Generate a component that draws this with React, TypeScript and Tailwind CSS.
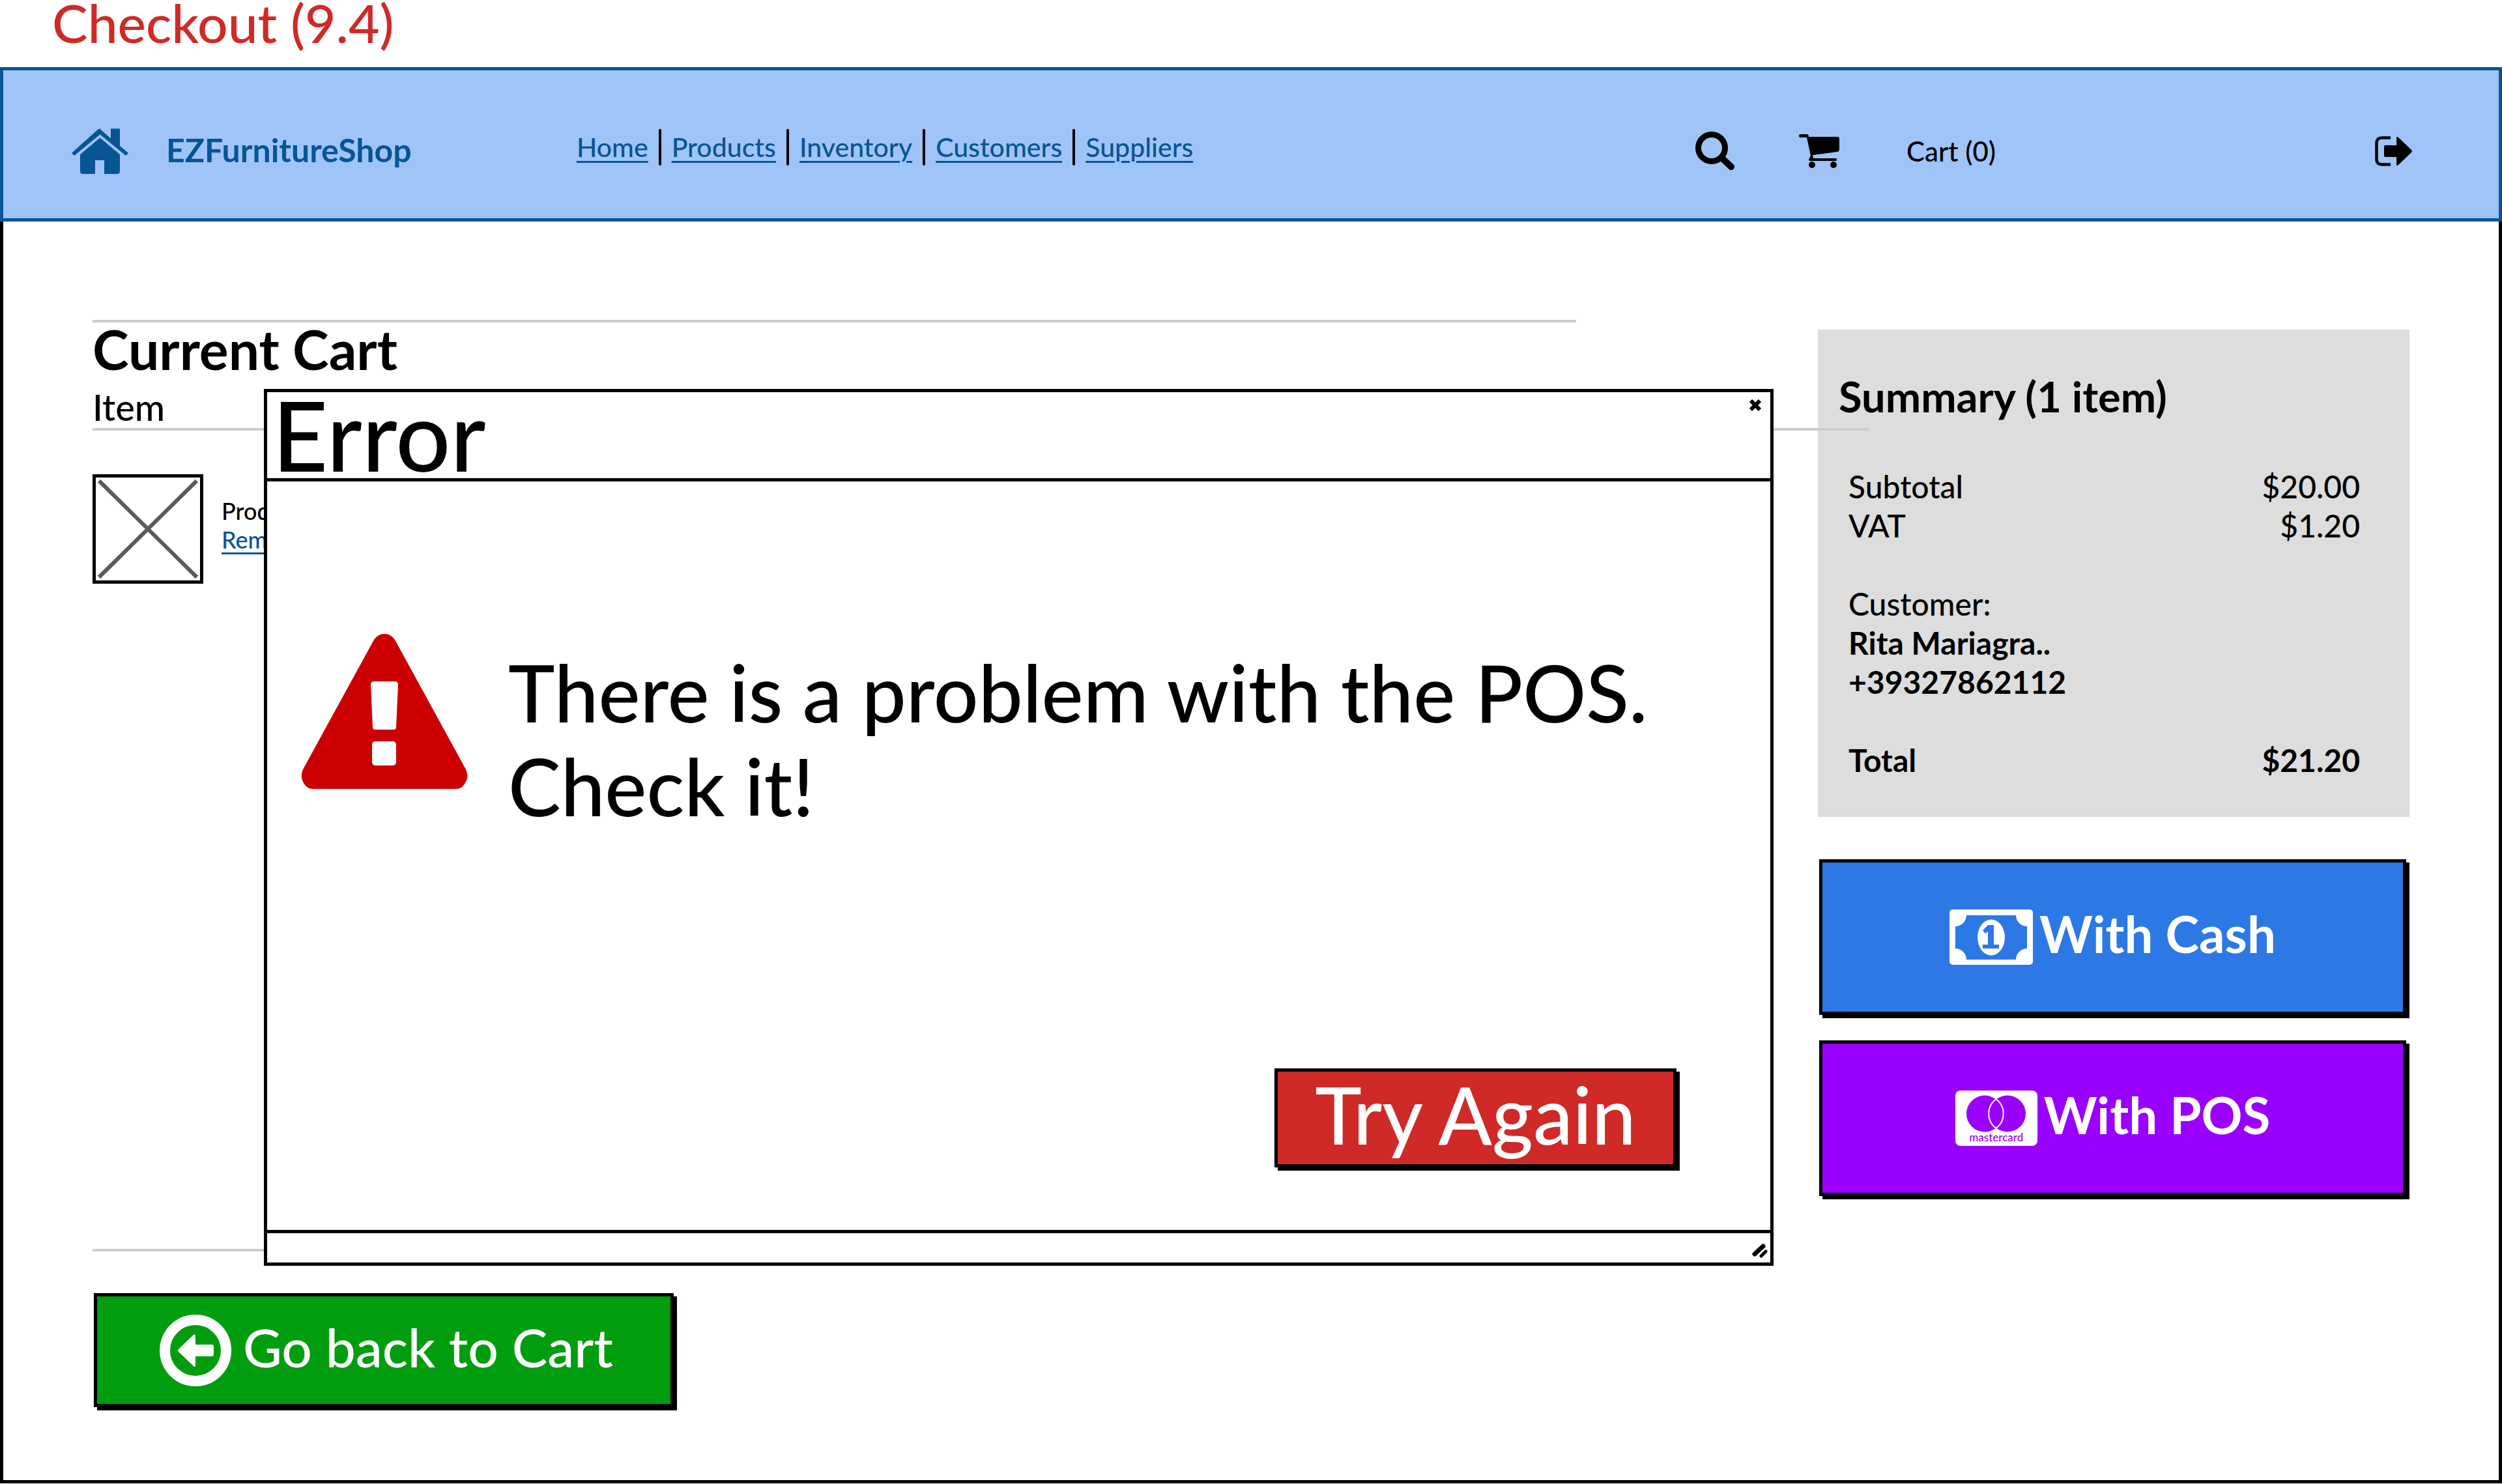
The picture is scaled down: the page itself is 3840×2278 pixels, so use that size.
import { Fragment, type ReactNode } from "react";

const links = ["Home", "Products", "Inventory", "Customers", "Suppliers"];

function HomeIcon() {
  return (
    <svg viewBox="0 0 87 70" className="h-[70px] w-[87px]" fill="#075594" aria-hidden="true">
      <path d="M43.5 1 L60 15.500 V0.500 H74 V27 L86 37 Q87 38 86 39 L84 41.500 Q83 42 82 41 L43.500 9.500 L5 41 Q4 42 3 41.500 L1 39 Q0 38 1 37 L40 2 Q43.500 -0.500 46 2 Z" />
      <path d="M43.500 14.500 L74 40 V66 Q74 70 70 70 H50 V49 H36 V70 H17 Q13 70 13 66 V40 Z" />
    </svg>
  );
}

function SearchIcon() {
  return (
    <svg viewBox="0 0 62 60" className="h-[60px] w-[62px]" fill="none" stroke="currentColor" aria-hidden="true">
      <circle cx="26" cy="25" r="20.500" strokeWidth="9" />
      <path d="M42 41 L56 54" strokeWidth="10" strokeLinecap="round" />
    </svg>
  );
}

function CartIcon() {
  return (
    <svg viewBox="0 0 62 54" className="h-[54px] w-[62px]" fill="currentColor" aria-hidden="true">
      <path d="M2 1 H12 Q15 1 15 5 H59 Q62 5 62 8 V24 Q62 27 59 28 L21 33 L22 38 H56 Q58 38 58 40 Q58 42 56 42 H17 Q15 42 15 40 L18 34 L12 6 H2 Q0 6 0 3.500 Q0 1 2 1 Z" />
      <circle cx="20" cy="48" r="5" />
      <circle cx="53" cy="48" r="5" />
    </svg>
  );
}

function LogoutIcon() {
  return (
    <svg viewBox="0 0 57 46" className="h-[46px] w-[57px]" aria-hidden="true">
      <path d="M24 2.500 H11 Q2.500 2.500 2.500 11 V35 Q2.500 43.500 11 43.500 H24" fill="none" stroke="currentColor" strokeWidth="4.500" />
      <path d="M16 14 H33 V2 Q34 0 36 2 L56 21 Q57.500 23 56 25 L36 44 Q34 46 33 44 V32 H16 Q14 32 14 30 V16 Q14 14 16 14 Z" fill="currentColor" />
    </svg>
  );
}

function WarningIcon() {
  return (
    <svg viewBox="0 0 256 238" className="h-[238px] w-[256px] shrink-0" aria-hidden="true">
      <path d="M128 0 Q138 0 144 9 L253 208 Q258 220 252 229 Q247 238 238 238 H18 Q9 238 4 229 Q-2 220 3 208 L112 9 Q118 0 128 0 Z" fill="#cc0000" />
      <path d="M112 73 H144 Q149 73 149 78 L146 143 Q146 147 142 147 H114 Q110 147 110 143 L107 78 Q107 73 112 73 Z" fill="#fff" />
      <rect x="109" y="165" width="37" height="37" rx="5" fill="#fff" />
    </svg>
  );
}

function CashIcon() {
  return (
    <svg viewBox="0 0 128 85" className="h-[85px] w-[128px]" aria-hidden="true">
      <rect width="128" height="85" rx="5" fill="#fff" />
      <path d="M26 9 H102 A17 17 0 0 0 119 26 V60 A17 17 0 0 0 102 77 H26 A17 17 0 0 0 9 60 V26 A17 17 0 0 0 26 9 Z" fill="#2c78e4" />
      <ellipse cx="64" cy="43" rx="21" ry="27.500" fill="#fff" />
      <path d="M59 24 H68 V54 H76 V60 H51 V54 H59 V34 L55 37 L51 32 Z" fill="#2c78e4" />
    </svg>
  );
}

function CardIcon() {
  return (
    <span className="flex h-[85px] w-[126px] flex-col items-center rounded-lg bg-white pt-[7px] text-[#9900ff]">
      <svg viewBox="0 0 91 57" className="h-[57px] w-[91px]" aria-hidden="true">
        <circle cx="28" cy="28.500" r="28" fill="currentColor" />
        <circle cx="63" cy="28.500" r="28" fill="currentColor" />
        <path d="M45.500 6 A28 28 0 0 1 45.500 51 A28 28 0 0 1 45.500 6 Z" fill="none" stroke="#fff" strokeWidth="2" />
      </svg>
      <span className="text-[17px] font-medium leading-[16px]">mastercard</span>
    </span>
  );
}

function BackIcon() {
  return (
    <svg viewBox="0 0 110 110" className="h-[110px] w-[110px]" aria-hidden="true">
      <circle cx="55" cy="55" r="47" fill="none" stroke="#fff" strokeWidth="16" />
      <path d="M52 31 Q55 29 55 33 V46 H80 Q83 46 83 49 V61 Q83 64 80 64 H55 V77 Q55 82 52 79 L29 57 Q27 55 29 53 Z" fill="#fff" />
    </svg>
  );
}

function SketchButton({ className, icon, label }: { className: string; icon?: ReactNode; label: string }) {
  return (
    <button type="button" className={`flex items-center border-[5px] border-black text-white shadow-[5px_5px_0_#000] ${className}`}>
      {icon}
      <span className="pb-2.5">{label}</span>
    </button>
  );
}

function Row({ label, value }: { label: string; value: string }) {
  return (
    <div className="flex justify-between">
      <dt>{label}</dt>
      <dd>{value}</dd>
    </div>
  );
}

export default function App() {
  return (
    <div className="bg-white font-['Lato',sans-serif] font-medium text-black">
      <h1 className="h-[103px] px-20 text-[82px] leading-[68px] text-[#cf2a27]">Checkout (9.4)</h1>

      <header className="flex h-[237px] items-center border-[5px] border-[#075594] bg-[#9fc4f8] pl-[105px] pr-[133px] pt-5">
        <a href="#home" aria-label="Home page">
          <HomeIcon />
        </a>
        <p className="ml-[58px] w-[630px] pb-1 text-[50px] font-bold leading-[56px] text-[#075594]">EZFurnitureShop</p>
        <nav className="mb-3 flex items-center gap-4 text-[41px] leading-[48px]">
          {links.map((name, i) => (
            <Fragment key={name}>
              {i > 0 && <span className="h-14 w-1 rounded-full bg-black" />}
              <a href={`#${name.toLowerCase()}`} className="text-[#075594] underline decoration-3 underline-offset-[6px]">
                {name}
              </a>
            </Fragment>
          ))}
        </nav>
        <div className="ml-auto flex w-[1101px] items-center">
          <button type="button" aria-label="Search">
            <SearchIcon />
          </button>
          <a href="#cart" className="ml-[98px] flex items-center gap-[103px] text-[42px] leading-[48px]">
            <CartIcon />
            Cart (0)
          </a>
          <button type="button" aria-label="Log out" className="ml-auto">
            <LogoutIcon />
          </button>
        </div>
      </header>

      <main className="relative flex border-x-[5px] border-b-[5px] border-black px-[137px] pb-[112px]">
        <section className="min-w-0 flex-1 pt-[151px]">
          <hr className="w-[86%] border-t-4 border-[#cccccc]" />
          <h2 className="text-[84px] font-bold leading-[82px]">Current Cart</h2>
          <h3 className="mt-4 text-[56px] leading-[64px]">Item</h3>
          <div className="relative z-10 w-[103%] border-t-4 border-[#cccccc]" />
          <div className="mt-[67px] flex h-[1189px] items-start gap-[28px]">
            <svg viewBox="0 0 170 168" className="h-[168px] w-[170px]" fill="none" aria-hidden="true">
              <rect x="2.500" y="2.500" width="165" height="163" stroke="#000" strokeWidth="5" />
              <path d="M10 10 L160 158 M160 10 L10 158" stroke="#5b5b5b" strokeWidth="6" />
            </svg>
            <div className="pt-[34px] text-[36px] leading-[44px]">
              <p>Product</p>
              <a href="#remove" className="text-[#075594] underline decoration-3 underline-offset-[6px]">
                Remove
              </a>
            </div>
          </div>
          <hr className="w-[86%] border-t-4 border-[#cccccc]" />
          <SketchButton
            className="ml-0.5 mt-16 h-[175px] w-[890px] gap-[18px] bg-[#009e0f] pl-[96px] text-[82px]"
            icon={<BackIcon />}
            label="Go back to Cart"
          />
        </section>

        <aside className="w-[908px] pt-[166px]">
          <section className="h-[748px] bg-[#dddddd] pl-[47px] pr-[76px] pt-16">
            <h2 className="-ml-[15px] text-[65px] font-bold leading-[76px]">Summary (1 item)</h2>
            <dl className="mt-[71px] text-[48px] leading-[60px]">
              <Row label="Subtotal" value="$20.00" />
              <Row label="VAT" value="$1.20" />
              <div className="mt-[60px]">
                <dt>Customer:</dt>
                <dd className="font-bold">Rita Mariagra..</dd>
                <dd className="font-bold">+39327862112</dd>
              </div>
              <div className="mt-[60px] font-bold">
                <Row label="Total" value="$21.20" />
              </div>
            </dl>
          </section>
          <SketchButton
            className="ml-0.5 mt-[65px] h-[239px] w-[901px] justify-center gap-2.5 bg-[#2c78e4] text-[78px] font-bold"
            icon={<CashIcon />}
            label="With Cash"
          />
          <SketchButton
            className="ml-0.5 mt-[39px] h-[239px] w-[901px] justify-center gap-2.5 bg-[#9900ff] text-[78px] font-bold"
            icon={<CardIcon />}
            label="With POS"
          />
        </aside>

        <div
          role="dialog"
          aria-labelledby="dialog-title"
          className="absolute left-[400px] right-[1113px] top-[257px] z-20 flex h-[1346px] flex-col border-[5px] border-black bg-white"
        >
          <div className="flex h-[137px] items-start justify-between border-b-[5px] border-black pl-2">
            <h2 id="dialog-title" className="text-[148px] leading-[130px]">
              Error
            </h2>
            <button type="button" aria-label="Close" className="mr-3.5 mt-[11px]">
              <svg viewBox="0 0 18 18" className="h-[18px] w-[18px]" stroke="#000" strokeWidth="6" aria-hidden="true">
                <path d="M2 2 L16 16 M16 2 L2 16" />
              </svg>
            </button>
          </div>
          <div className="flex flex-1 flex-col justify-between pb-24 pl-[52px] pr-[144px] pt-[234px]">
            <div className="flex gap-[62px]">
              <WarningIcon />
              <p className="pt-[18px] text-[121px] leading-[144px]">
                There is a problem with the POS.
                <br />
                Check it!
              </p>
            </div>
            <SketchButton
              className="h-[152px] w-[617px] justify-center self-end bg-[#cf2a27] text-[121px] leading-[136px]"
              label="Try Again"
            />
          </div>
          <div className="flex h-[50px] items-center justify-end border-t-[5px] border-black pr-1 pt-2">
            <svg viewBox="0 0 24 22" className="h-[22px] w-[24px]" stroke="#000" strokeLinecap="round" aria-hidden="true">
              <path d="M4 16 L17 4" strokeWidth="7" />
              <path d="M14 19 L21 12" strokeWidth="5" />
            </svg>
          </div>
        </div>
      </main>
    </div>
  );
}
